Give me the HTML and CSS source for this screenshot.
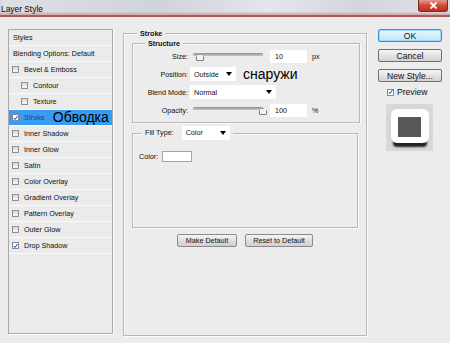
FILE: index.html
```html
<!DOCTYPE html>
<html lang="ru">
<head>
  <meta charset="UTF-8" />
  <title>Layer Style</title>
  <link rel="stylesheet" href="styles.css">
</head>
<body>
  <div class="titlebar">
    <span class="title">Layer Style</span>
    <div class="close">
      <svg width="9" height="7" viewBox="0 0 9 7"><path d="M1.5 0.5 L7.5 6.5 M7.5 0.5 L1.5 6.5" stroke="#fff" stroke-width="1.8"/></svg>
    </div>
  </div>

  <div class="main">
    <!-- список эффектов -->
    <div class="styles-panel">
      <div class="row plain">Styles</div>
      <div class="row plain">Blending Options: Default</div>
      <div class="row"><span class="cb"></span>Bevel &amp; Emboss</div>
      <div class="row sub"><span class="cb"></span>Contour</div>
      <div class="row sub"><span class="cb"></span>Texture</div>
      <div class="row selected">
        <span class="cb on"><svg width="6" height="6" viewBox="0 0 6 6"><path d="M0.8 3 L2.4 4.8 L5.4 0.6" fill="none" stroke="#23408f" stroke-width="1.2"/></svg></span>Stroke<span class="note">Обводка</span>
      </div>
      <div class="row"><span class="cb"></span>Inner Shadow</div>
      <div class="row"><span class="cb"></span>Inner Glow</div>
      <div class="row"><span class="cb"></span>Satin</div>
      <div class="row"><span class="cb"></span>Color Overlay</div>
      <div class="row"><span class="cb"></span>Gradient Overlay</div>
      <div class="row"><span class="cb"></span>Pattern Overlay</div>
      <div class="row"><span class="cb"></span>Outer Glow</div>
      <div class="row">
        <span class="cb on"><svg width="6" height="6" viewBox="0 0 6 6"><path d="M0.8 3 L2.4 4.8 L5.4 0.6" fill="none" stroke="#23408f" stroke-width="1.2"/></svg></span>Drop Shadow
      </div>
    </div>

    <!-- настройки обводки -->
    <div class="center">
      <div class="group stroke-group">
        <span class="legend">Stroke</span>

        <div class="group structure">
          <span class="legend structure-legend">Structure</span>
          <div class="field">
            <label>Size:</label>
            <div class="slider"><span class="thumb" style="left: 3px"></span></div>
            <span class="num">10</span><span class="unit">px</span>
          </div>
          <div class="field">
            <label>Position:</label>
            <span class="select pos">Outside<i></i></span>
            <span class="ru">снаружи</span>
          </div>
          <div class="field">
            <label>Blend Mode:</label>
            <span class="select blend">Normal<i></i></span>
          </div>
          <div class="field">
            <label>Opacity:</label>
            <div class="slider"><span class="thumb" style="left: 66px"></span></div>
            <span class="num">100</span><span class="unit">%</span>
          </div>
        </div>

        <div class="group fill">
          <div class="legend fill-legend">Fill Type: <span class="select filltype">Color<i></i></span></div>
          <div class="color-row">Color: <span class="swatch"></span></div>
        </div>

        <div class="buttons">
          <button class="small-btn make">Make Default</button>
          <button class="small-btn reset">Reset to Default</button>
        </div>
      </div>
    </div>

    <!-- кнопки справа -->
    <div class="side">
      <button class="btn ok">OK</button>
      <button class="btn">Cancel</button>
      <button class="btn">New Style...</button>
      <div class="preview-check">
        <span class="cb on"><svg width="6" height="6" viewBox="0 0 6 6"><path d="M0.8 3 L2.4 4.8 L5.4 0.6" fill="none" stroke="#23408f" stroke-width="1.2"/></svg></span>Preview
      </div>
      <div class="preview">
        <div class="preview-shape"><div class="preview-inner"></div></div>
      </div>
    </div>
  </div>
</body>
</html>
```

FILE: styles.css
```css
* {
  box-sizing: border-box;
}
body {
  margin: 0;
  width: 450px;
  height: 343px;
  overflow: hidden;
  background: #ececec;
  font-family: "Liberation Sans", Arial, sans-serif;
  font-size: 7.2px;
  color: #0e0e0e;
}
.titlebar {
  height: 17px;
  display: flex;
  justify-content: space-between;
  align-items: flex-start;
  background: linear-gradient(to right, #dde1e6, #cfd4da 35%, #e3e6ea 60%, #d2d6dc 80%, #e0e3e7);
  border-bottom: 2px solid #b0585c;
  box-shadow: 0 -2px 2px #d7a9aa inset;
}
.title {
  font-size: 8.4px;
  padding: 4px 0 0 1px;
  color: #000;
}
.close {
  width: 30px;
  height: 12px;
  margin-right: 2px;
  display: flex;
  align-items: center;
  justify-content: center;
  background: linear-gradient(#e49a8e, #cf4a36 50%, #b43320);
  border: 1px solid #7d2b22;
  border-top: none;
  border-radius: 0 0 3px 3px;
}
.main {
  display: flex;
  padding: 12px 0 0 8px;
}

/* список эффектов */
.styles-panel {
  width: 105px;
  height: 305px;
  border: 1px solid #a9a9a9;
  background: #ebebeb;
  box-shadow: 1px 1px 0 #fff;
}
.row {
  height: 16px;
  display: flex;
  align-items: center;
  padding-left: 3px;
  border-bottom: 1px solid #fafafa;
  white-space: nowrap;
}
.row.plain {
  padding-left: 4px;
}
.row.sub {
  padding-left: 12px;
}
.row.selected {
  background: #3a9cf0;
  color: #2b3f7a;
}
.cb {
  width: 7px;
  height: 7px;
  margin-right: 5px;
  border: 1px solid #8f8f8f;
  background: linear-gradient(#d8d8d8, #f8f8f8);
  display: inline-flex;
  align-items: center;
  justify-content: center;
  flex: none;
}
.cb.on {
  background: #fff;
  border-color: #7d8ca6;
}
.note {
  font-size: 14px;
  line-height: 15px;
  margin-left: 8px;
  color: #000;
}

/* группы */
.center {
  margin-left: 10px;
  padding-top: 4px;
}
.group {
  position: relative;
  border: 1px solid #b8b8b8;
  box-shadow: inset 1px 1px 0 #fafafa, 1px 1px 0 #fafafa;
}
.legend {
  position: absolute;
  top: -5px;
  left: 13px;
  padding: 0 3px;
  background: #ececec;
  font-weight: bold;
  line-height: 10px;
  color: #111;
}
.stroke-group {
  width: 244px;
  height: 303px;
  padding: 9px 0 0 8px;
}
.structure {
  width: 228px;
  height: 80px;
  padding-top: 5px;
}
.structure-legend {
  left: 12px;
}
.field {
  display: flex;
  align-items: center;
  height: 14px;
  margin-bottom: 4px;
}
.field label {
  width: 55px;
  text-align: right;
  margin-right: 2px;
}
.slider {
  position: relative;
  width: 70px;
  height: 14px;
  margin-left: 3px;
}
.slider::before {
  content: "";
  position: absolute;
  left: 0;
  right: 0;
  top: 4px;
  height: 3px;
  border-radius: 2px;
  background: linear-gradient(#8e8e8e, #c9c9c9);
}
.thumb {
  position: absolute;
  top: 5px;
  width: 8px;
  height: 7px;
  background: #f4f4f4;
  border: 1px solid #7d7d7d;
  clip-path: polygon(50% 0, 100% 40%, 100% 100%, 0 100%, 0 40%);
  border-radius: 1px;
}
.num {
  width: 37px;
  height: 13px;
  margin-left: 7px;
  padding-left: 5px;
  line-height: 13px;
  background: #fff;
}
.unit {
  margin-left: 5px;
}
.select {
  display: flex;
  align-items: center;
  justify-content: space-between;
  height: 14px;
  padding: 0 4px;
  background: #fff;
  font-weight: normal;
}
.select i {
  width: 0;
  height: 0;
  border-left: 3px solid transparent;
  border-right: 3px solid transparent;
  border-top: 4px solid #000;
}
.pos {
  width: 46px;
}
.blend {
  width: 86px;
}
.ru {
  font-size: 14px;
  line-height: 14px;
  margin-left: 7px;
  color: #000;
}
.fill {
  width: 226px;
  height: 95px;
  margin-top: 10px;
  padding: 17px 0 0 6px;
}
.fill-legend {
  display: flex;
  align-items: center;
  top: -8px;
  left: 9px;
  font-weight: normal;
  line-height: 14px;
}
.filltype {
  width: 48px;
  margin-left: 8px;
}
.color-row {
  display: flex;
  align-items: center;
  height: 11px;
}
.swatch {
  width: 30px;
  height: 11px;
  margin-left: 4px;
  background: #fff;
  border: 1px solid #a5a5a5;
}
.buttons {
  display: flex;
  justify-content: center;
  gap: 8px;
  margin: 6px 0 0 -8px;
}
.small-btn {
  height: 13px;
  padding: 0;
  font-family: inherit;
  font-size: 7.2px;
  color: #111;
  border: 1px solid #8a8a8a;
  border-radius: 2px;
  background: linear-gradient(#f6f6f6, #dedede 50%, #d0d0d0);
}
.make {
  width: 60px;
}
.reset {
  width: 68px;
}

/* правая колонка */
.side {
  margin-left: 11px;
  width: 64px;
  display: flex;
  flex-direction: column;
  gap: 7px;
}
.btn {
  width: 64px;
  height: 13px;
  padding: 0;
  font-family: inherit;
  font-size: 8.6px;
  color: #111;
  border: 1px solid #707070;
  border-radius: 2px;
  background: linear-gradient(#f4f4f4, #e4e4e4 50%, #d3d3d3);
}
.btn.ok {
  border-color: #3a8fd0;
  background: linear-gradient(#eaf6fd, #d4eefc 50%, #bce4fa);
  box-shadow: inset 0 0 0 1px #9fd8f8;
}
.preview-check {
  display: flex;
  align-items: center;
  margin-top: -2px;
  padding-left: 9px;
  font-size: 8.6px;
  height: 10px;
}
.preview-check .cb {
  margin-right: 3px;
}
.preview {
  width: 47px;
  height: 47px;
  margin-left: 8px;
  padding-top: 5px;
  display: flex;
  justify-content: center;
  background: radial-gradient(#cfcfcf, #dadada);
}
.preview-shape {
  width: 38px;
  height: 34px;
  border-radius: 6px;
  background: #fff;
  display: flex;
  justify-content: center;
  padding-top: 8px;
  box-shadow: 0 6px 2px -2px #222;
}
.preview-inner {
  width: 23px;
  height: 20px;
  background: #575757;
}
```
